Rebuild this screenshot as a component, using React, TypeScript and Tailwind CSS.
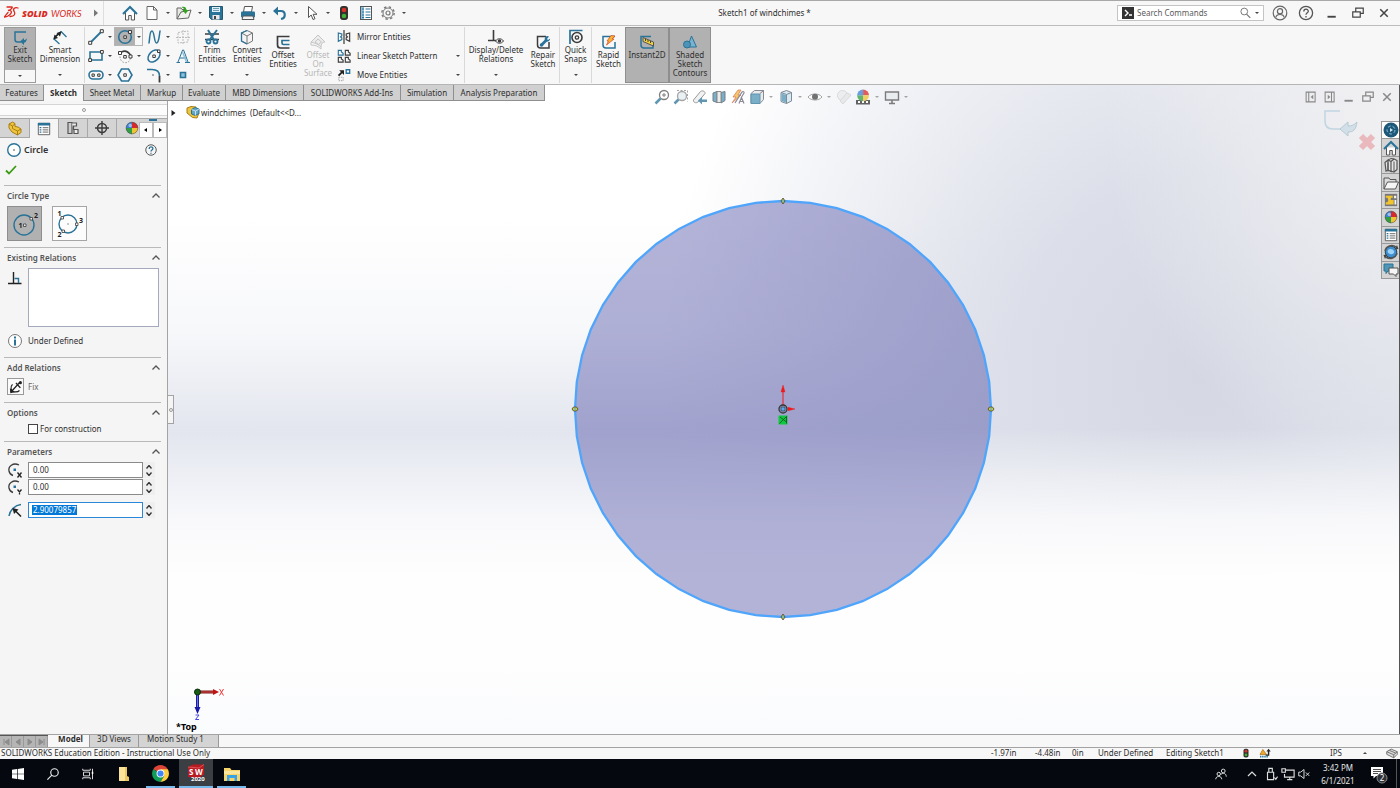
import React from "react";

type IconProps = { size?: string; children: React.ReactNode; box?: string };

const Svg = ({ size = "size-4", children, box = "0 0 16 16" }: IconProps) => (
  <svg className={`${size} shrink-0`} viewBox={box} fill="none" aria-hidden="true">
    {children}
  </svg>
);

const B = "#2a7398";
const L = "#8cc1dd";
const K = "#3c3c3c";

const Caret = ({ up = false }: { up?: boolean }) => (
  <Svg size="size-1" box="0 0 4 4">
    <path d={up ? "M0 3h4L2 1z" : "M0 1h4L2 3z"} fill="#444" />
  </Svg>
);

/* ---------- file toolbar icons ---------- */

const HomeIcon = () => (
  <Svg>
    <path d="M3.5 7.5V15h3.2v-4.500h2.600V15h3.200V7.500" fill="#fff" stroke="#555" />
    <path d="M1 9 8 2l7 7" stroke={B} strokeWidth="2" />
  </Svg>
);
const NewIcon = () => (
  <Svg>
    <path d="M3 1.500h6.500l3.500 3.500v9.500H3z" fill="#fdfdfd" stroke="#666" />
    <path d="M9.500 1.500V5H13" stroke="#666" />
  </Svg>
);
const OpenIcon = () => (
  <Svg>
    <path d="M1 14V3h4l1 1.500h4V7" fill="#e7e7e4" stroke="#666" />
    <path d="M1 14 5 7l10-2-2.500 8z" fill="#f1f1ee" stroke="#666" />
    <path d="M5 2c4-1 5 0 5.500 3h2L9.500 9 6.500 5h2C8 3.500 7 2.500 5 2z" fill="#35a321" />
  </Svg>
);
const SaveIcon = () => (
  <Svg>
    <path d="M1.500 1.500h13v13h-11l-2-2z" fill={B} stroke="#245871" />
    <path d="M4 2h8v5H4z" fill="#dff0f8" />
    <path d="M5 3.500h6M5 5.500h6" stroke="#6a9bb3" />
    <path d="M4.500 10h7v4.500h-7z" fill="#e8e8e8" />
    <path d="M6 11h2v3H6z" fill="#444" />
  </Svg>
);
const PrintIcon = () => (
  <Svg>
    <path d="M4.500 1.500h8L11.500 7h-8z" fill="#fff" stroke="#555" />
    <rect x="1" y="6.500" width="14" height="6" rx="1" fill={B} />
    <path d="M3 11h10l1 3.500H2z" fill="#f2f2f2" stroke="#555" />
  </Svg>
);
const UndoIcon = () => (
  <Svg>
    <path d="M4 6h5c5 0 5 7 0 8" stroke={B} strokeWidth="2.200" />
    <path d="M1 6l5-4.500v9z" fill={B} />
  </Svg>
);
const CursorIcon = () => (
  <Svg>
    <path d="M4.500 1.500v11l2.700-2.500 1.800 4.500 2-.800-1.900-4.400H13z" fill="#fff" stroke="#555" />
  </Svg>
);
const TrafficIcon = ({ size = "size-4" }: { size?: string }) => (
  <Svg size={size}>
    <rect x="4" y="1" width="8" height="14" rx="3" fill="#30302c" />
    <circle cx="8" cy="5" r="2.300" fill="#d8312a" />
    <circle cx="8" cy="11" r="2.300" fill="#3fae3a" />
  </Svg>
);
const ListIcon = () => (
  <Svg>
    <rect x="2.500" y="1.500" width="11" height="13" fill="#fff" stroke="#555" />
    <path d="M3 2h3v12H3z" fill={L} />
    <path d="M4 4h2M4 7h2M4 10h2M4 12.500h2M7.500 4h5M7.500 7h5M7.500 10h5M7.500 12.500h5" stroke={B} />
  </Svg>
);
const GearIcon = () => (
  <Svg>
    <circle cx="8" cy="8" r="5" stroke="#777" />
    <circle cx="8" cy="8" r="6.200" stroke="#777" strokeWidth="1.400" strokeDasharray="2.400 2.470" />
    <circle cx="8" cy="8" r="2" stroke="#777" strokeWidth="1.200" />
  </Svg>
);

const Logo = () => (
  <svg className="h-[18px] w-[84px] shrink-0" viewBox="0 0 84 18" role="img" aria-label="SOLIDWORKS">
    <g fill="none" stroke="#da291c" strokeWidth="1.300" strokeLinecap="round">
      <path d="M3 3h5c1 1-2 3-4 3.500 4-.500 4.500 2 1.500 4.500-1.500 1.300-4 2-5 2 1-1.500 2-3 3.500-4.500" />
      <path d="M14 4c-3-1.200-5.500.600-4 3.200 1.600 2.600 1 5-4 5.300" />
    </g>
    <text x="18" y="13" fill="#da291c" fontFamily="Open Sans, sans-serif" fontSize="9" fontStyle="italic" fontWeight="800">SOLID</text>
    <text x="47" y="13" fill="#da291c" fontFamily="Lato, sans-serif" fontSize="9" fontStyle="italic">WORKS</text>
  </svg>
);

const Tool = ({ label, caret, children }: { label: string; caret?: boolean; children: React.ReactNode }) => (
  <>
    <button aria-label={label} className="flex size-4 items-center justify-center">{children}</button>
    {caret && (
      <button aria-label={`${label} options`} className="flex size-4 items-center justify-center"><Caret /></button>
    )}
  </>
);

const Minimise = () => <Svg size="size-3"><path d="M2 13h11" stroke="currentColor" strokeWidth="2.500" /></Svg>;
const Restore = () => (
  <Svg size="size-3"><path d="M5 6V1.500h10v7h-4M1 6.500h10v7H1z" stroke="currentColor" strokeWidth="1.600" /></Svg>
);
const Close = () => <Svg size="size-3"><path d="m3 3 10 10M13 3 3 13" stroke="currentColor" strokeWidth="2" /></Svg>;

const TitleBar = () => (
  <header className="flex h-[26px] shrink-0 items-center border-y border-t-[#a8a8a8] border-b-[#bdbdbd] bg-[#f7f7f7]">
    <div className="flex h-full w-[104px] items-center border-r border-[#dedede] pl-1">
      <Logo />
      <button aria-label="Expand menu" className="flex w-3 justify-end">
        <Svg size="size-2" box="0 0 8 8"><path d="M2 .500v7L6 4z" fill="#777" /></Svg>
      </button>
    </div>
    <nav className="flex items-center pl-[18px]" aria-label="File tools">
      <div className="mr-1.5 flex"><Tool label="Home"><HomeIcon /></Tool></div>
      <Tool label="New" caret><NewIcon /></Tool>
      <Tool label="Open" caret><OpenIcon /></Tool>
      <Tool label="Save" caret><SaveIcon /></Tool>
      <Tool label="Print" caret><PrintIcon /></Tool>
      <Tool label="Undo" caret><UndoIcon /></Tool>
      <Tool label="Select" caret><CursorIcon /></Tool>
      <Tool label="Rebuild"><TrafficIcon /></Tool>
      <div className="ml-1.5 flex"><Tool label="File properties"><ListIcon /></Tool></div>
      <div className="ml-1.5 flex"><Tool label="Options" caret><GearIcon /></Tool></div>
    </nav>
    <h1 className="flex-1 text-center">Sketch1 of windchimes *</h1>
    <div className="flex h-4 w-[147px] items-center border border-[#c4c4c4] bg-white px-1">
      <Svg size="size-3" box="0 0 12 12">
        <path d="M0 0h12v12H0z" fill="#333" />
        <path d="M3 3l3 3-3 3M7 8h3" stroke="#fff" strokeWidth="1.400" />
      </Svg>
      <input aria-label="Search Commands" placeholder="Search Commands" className="ml-[3px] w-0 flex-1 outline-none placeholder:text-[#5c5c5c]" />
      <button aria-label="Search">
        <Svg size="size-3"><circle cx="7" cy="6" r="4.500" stroke="#777" strokeWidth="1.300" /><path d="m10 9.500 5 5" stroke="#777" strokeWidth="1.600" /></Svg>
      </button>
      <button aria-label="Search options" className="ml-1"><Caret /></button>
    </div>
    <div className="ml-[3px] flex text-[#444]">
      <button aria-label="Account" className="flex w-[26px] justify-center">
        <Svg><g stroke="#666" strokeWidth="1.200"><circle cx="8" cy="8" r="6.800" /><circle cx="8" cy="6.300" r="2.600" /><path d="M3.800 12.500C4.500 8.500 11.500 8.500 12.200 12.500" /></g></Svg>
      </button>
      <button aria-label="Help" className="flex w-[26px] justify-center">
        <Svg><g stroke="#555" strokeWidth="1.300"><circle cx="8" cy="8" r="6.600" /><path d="M5.800 6.500c0-3 4.500-3 4.500-.300C10.300 7.800 8 7.800 8 9.800M8 11v1.500" /></g></Svg>
      </button>
      <button aria-label="Minimize" className="flex w-[26px] items-center justify-center"><Minimise /></button>
      <button aria-label="Restore" className="flex w-[26px] items-center justify-center"><Restore /></button>
      <button aria-label="Close" className="mr-[3px] flex w-[26px] items-center justify-center"><Close /></button>
    </div>
  </header>
);

/* ---------- ribbon icons ---------- */

const ExitIcon = () => (
  <Svg>
    <path d="M14 3H3v7.500Q3 13 5.500 13H9" stroke={B} strokeWidth="1.500" />
    <path d="M8 12.500 12 9v2c1.500 0 2-.500 3-2-.300 3-1.500 4.700-3 4.700V16z" fill={B} />
  </Svg>
);
const DimensionIcon = () => (
  <Svg>
    <path d="M2 9 9 2.500M1.500 9.500l6 5.500M9 2.500 14.500 8" stroke={B} strokeWidth="1.300" />
    <path d="M4.500 4 9.500 2.500 8 7.500zM1.500 10.500l1-5 3.500 3.500z" fill="#222" />
    <path d="M3.500 7.500 7.500 4" stroke="#222" strokeWidth="1.600" />
  </Svg>
);
const LineIcon = () => (
  <Svg>
    <path d="M3 13 13 3" stroke={B} strokeWidth="1.800" />
    <path d="M.700 12.300h3v3h-3zM12.300.700h3v3h-3z" fill="#fff" stroke={K} />
  </Svg>
);
const CircleIcon = () => (
  <Svg>
    <circle cx="8" cy="8" r="6.300" stroke={B} strokeWidth="1.600" />
    <path d="M6.800 6.800h2.600v2.600H6.800zM11.500 1.500h3v3h-3z" fill="#eee" stroke={K} />
  </Svg>
);
const SplineIcon = () => (
  <Svg><path d="M3 14C4 8 3.500 2 6 2s2 12 4.500 12S13 8 14 2" stroke={B} strokeWidth="1.500" strokeLinecap="round" /></Svg>
);
const PlaneIcon = () => (
  <Svg><path d="M3 3.500 13 2v11L3 14zM8 1v14M1 8.500h14" stroke="#bbb" strokeDasharray="2 1" /></Svg>
);
const RectIcon = () => (
  <Svg>
    <path d="M2 4h12v8H2z" stroke={B} strokeWidth="1.600" />
    <path d="M.700 10.700h2.800v2.800H.700zM12.500 2.500h2.800v2.800h-2.800z" fill="#fff" stroke={K} />
  </Svg>
);
const ArcIcon = () => (
  <Svg>
    <path d="M3 5.500C5 2 11 2 13.500 7.500" stroke={K} strokeWidth="1.700" />
    <path d="M3 8.500c0 8 10 8 10.500 1.500" stroke="#999" strokeDasharray="1.500 1.500" />
    <path d="M1.500 3.500h3v3h-3zM12 7h3v3h-3zM6.700 7.500h2.600v2.600H6.700z" fill="#fff" stroke={K} />
  </Svg>
);
const EllipseIcon = () => (
  <Svg>
    <ellipse cx="8" cy="8" rx="7" ry="4.800" transform="rotate(-45 8 8)" stroke={B} strokeWidth="1.500" />
    <path d="M6.800 7h2.500v2.500H6.800zM11.500 2h2.500v2.500h-2.500z" fill="#fff" stroke={K} />
  </Svg>
);
const TextIcon = () => (
  <Svg>
    <path d="M1.500 14.500H5M10 14.500h5M3 14 7.600 2h1L13 14M5 10h6" stroke={B} />
    <path d="M7.500 4 11.500 14" stroke={L} strokeWidth="1.500" />
  </Svg>
);
const SlotIcon = () => (
  <Svg>
    <rect x="1" y="4" width="14" height="8" rx="4" stroke={B} strokeWidth="1.600" />
    <path d="M4 7h2.300v2.300H4zM9.700 7H12v2.300H9.700z" stroke={K} />
  </Svg>
);
const PolygonIcon = () => (
  <Svg>
    <path d="M4.500 2h7L15 8l-3.500 6h-7L1 8z" stroke={B} strokeWidth="1.600" />
    <path d="M6.800 6.800h2.500v2.500H6.800z" fill="#fff" stroke={K} />
  </Svg>
);
const FilletIcon = () => (
  <Svg>
    <path d="M1 2.500h5C11 2.500 13.500 5 13.500 9" stroke={B} strokeWidth="1.600" />
    <path d="M13.500 9v6.500" stroke={K} strokeWidth="1.800" />
    <path d="M6 7l2 2M8 7 6 9" stroke="#aaa" />
  </Svg>
);
const PointIcon = () => <Svg><path d="M5.500 5.500h5v5h-5z" fill={L} stroke={B} strokeWidth="1.600" /></Svg>;
const TrimIcon = () => (
  <Svg>
    <path d="M1 5h14M1 10.500h14" stroke={K} strokeWidth="1.300" />
    <path d="M4 1l6 10M13 1 5.500 11" stroke={B} strokeWidth="2" />
    <circle cx="4.500" cy="12.500" r="2" stroke={B} strokeWidth="1.800" />
    <circle cx="11.500" cy="12.500" r="2" stroke={B} strokeWidth="1.800" />
  </Svg>
);
const ConvertIcon = () => (
  <Svg>
    <path d="M2.500 4 8 1.500l5.500 2.500v8L8 15l-5.500-3z" fill="#f4f4f4" stroke="#777" />
    <path d="M2.500 4 8 7v8M8 7l5.500-3" stroke="#777" />
    <path d="M8 1.500 2.500 4v8L8 15" stroke={B} strokeWidth="1.300" />
  </Svg>
);
const OffsetIcon = () => (
  <Svg>
    <path d="M14.500 2.500H2.500V11q0 3 3 3h9" stroke={K} strokeWidth="1.700" />
    <path d="M14.500 6.500H7V9q0 1.500 1.500 1.500h6" stroke={B} strokeWidth="1.700" />
  </Svg>
);
const SurfaceIcon = () => (
  <Svg>
    <path d="M1 8 8 1l7 7c-3 0-4 2-4 5-3-3-6-4-10-5z" fill="#ececec" stroke="#c5c5c5" />
    <path d="M5 8l3-3 3.500 3L8.500 10.500zM1 8v3c4 0 7 1 10 4v-2" stroke="#c5c5c5" />
  </Svg>
);
const MirrorIcon = () => (
  <Svg size="size-3.5">
    <path d="M8 0v16" stroke={K} strokeWidth="1.400" />
    <path d="M1.500 3.500v9.500l4-2V9l-1.500-1 1.500-1.500v-2z" stroke={B} strokeWidth="1.300" />
    <path d="M14.500 3.500v9.500l-4-2V9l1.500-1-1.500-1.500v-2z" stroke={K} strokeWidth="1.300" />
  </Svg>
);
const PatternIcon = () => (
  <Svg size="size-3.5">
    <path d="M1.500 1.500H5v2L7 5v2H1.500z" stroke={B} strokeWidth="1.300" />
    <path d="M9.500 1.500H13v2L15 5v2H9.500zM1.500 9.500H5v2L7 13v2H1.500zM9.500 9.500H13v2L15 13v2H9.500z" stroke={K} strokeWidth="1.300" />
  </Svg>
);
const MoveIcon = () => (
  <Svg size="size-3.5">
    <path d="M10.500 2h4v4h-4z" fill="#fff" stroke={B} strokeWidth="1.500" />
    <path d="M1 8l3.500-3.500L2.500 2.500H8V8L6 6 2.500 9.500z" fill="#222" />
    <path d="M2 10.500h5v4H2z" stroke="#999" strokeDasharray="1.500 1" />
  </Svg>
);
const RelationsIcon = () => (
  <Svg>
    <path d="M5.500 1v10M0 11.500h8" stroke={K} strokeWidth="1.600" />
    <path d="M7.500 12c2-3 6-3 8 0-2 3-6 3-8 0z" fill="#fff" stroke={K} />
    <circle cx="11.500" cy="12" r="1.800" fill={K} />
  </Svg>
);
const RepairIcon = () => (
  <Svg>
    <path d="M11 2.500H2.500V11q0 3 3 3H14V8" stroke={K} strokeWidth="1.500" />
    <path d="m6.500 11 5-5" stroke={B} strokeWidth="2.800" />
    <path d="M14 2.500 12 5l1 1 2.200-1.500A3 3 0 0 1 10.500 7 3 3 0 0 1 12 2z" fill={B} />
    <circle cx="6.500" cy="11" r="1.800" fill={B} />
  </Svg>
);
const SnapsIcon = () => (
  <Svg>
    <path d="M2 15V1.500h12.500" stroke={B} strokeWidth="1.700" />
    <circle cx="9" cy="8.500" r="5" stroke={K} strokeWidth="1.600" />
    <circle cx="9" cy="8.500" r="1.700" stroke={K} strokeWidth="1.300" />
  </Svg>
);
const RapidIcon = () => (
  <Svg>
    <path d="M14 2.500H2V11q0 3 3 3h9V8" stroke={B} strokeWidth="1.500" />
    <path d="m10 1.500 4 .5-3 3h2L5.500 11 7.500 7H6z" fill="#f6b331" stroke="#d9532c" strokeWidth=".8" />
  </Svg>
);
const InstantIcon = () => (
  <Svg>
    <path d="M12 2.500H2V11q0 3 3 3h9v-3" stroke={B} strokeWidth="1.500" />
    <path d="M4 3.500 14.500 8v4L4 7.500z" fill="#f3d23b" stroke="#555" />
    <path d="M6.500 5v2M9 6v2M11.500 7v2" stroke="#444" />
  </Svg>
);
const ShadedIcon = () => (
  <Svg>
    <path d="M9.500 2 14.500 13H5.500z" fill="#7ab3d0" stroke={B} />
    <circle cx="5" cy="10.500" r="3.500" fill="#4d93b7" stroke={B} />
  </Svg>
);

const Lines = ({ lines }: { lines: string[] }) => (
  <span className="flex flex-col whitespace-nowrap text-center leading-[9px]">
    {lines.map((l) => <span key={l}>{l}</span>)}
  </span>
);

type BigProps = { icon: React.ReactNode; lines: string[]; width: string; caret?: boolean; low?: boolean; on?: boolean; off?: boolean };

const Big = ({ icon, lines, width, caret, low, on, off }: BigProps) => (
  <button
    disabled={off}
    className={`flex h-14 shrink-0 flex-col items-center ${width} ${on ? "pt-1.5" : low ? "pt-[7px]" : "pt-0.5"} ${on ? "border border-[#8e8e8e] bg-[#b1b1b1]" : ""} ${off ? "text-[#b8b8b8]" : ""}`}
  >
    {icon}
    <Lines lines={lines} />
    {caret && <span className="mt-auto mb-1.5"><Caret /></span>}
  </button>
);

const Rule = () => <div className="h-14 w-px shrink-0 bg-[#d9d9d9]" />;

const Small = ({ label, caret = true, on, children }: { label: string; caret?: boolean; on?: boolean; children: React.ReactNode }) => (
  <div className={`flex h-[19px] items-center border ${on ? "border-[#b5b5b5]" : "border-transparent"}`}>
    <button aria-label={label} className={`flex h-full items-center px-0.5 ${on ? "bg-[#b1b1b1]" : ""}`}>{children}</button>
    {caret && <button aria-label={`${label} options`} className="flex h-full w-2 items-center justify-center"><Caret /></button>}
  </div>
);

const ListTool = ({ icon, label, caret }: { icon: React.ReactNode; label: string; caret?: boolean }) => (
  <div className="flex h-[19px] items-center">
    <button className="flex items-center gap-1.5 whitespace-nowrap">{icon}{label}</button>
    {caret && <button aria-label={`${label} options`} className="ml-auto"><Caret /></button>}
  </div>
);

const Ribbon = () => (
  <section className="flex h-[58px] shrink-0 bg-[#f7f7f7] py-px pl-1" aria-label="Sketch tools">
    <div className="flex h-14 w-8 flex-col border border-[#9b9b9b]">
      <button className="flex h-[42px] flex-col items-center bg-[#b1b1b1] pt-px">
        <ExitIcon />
        <Lines lines={["Exit", "Sketch"]} />
      </button>
      <button aria-label="Exit Sketch options" className="flex flex-1 items-center justify-center"><Caret /></button>
    </div>
    <Big icon={<DimensionIcon />} lines={["Smart", "Dimension"]} width="w-12" caret />
    <Rule />
    <div className="grid w-[109px] shrink-0 grid-cols-[29px_29px_29px_22px] content-start">
      <Small label="Line"><LineIcon /></Small>
      <Small label="Circle" on><CircleIcon /></Small>
      <Small label="Spline"><SplineIcon /></Small>
      <Small label="Sketch plane" caret={false}><PlaneIcon /></Small>
      <Small label="Rectangle"><RectIcon /></Small>
      <Small label="Arc"><ArcIcon /></Small>
      <Small label="Ellipse"><EllipseIcon /></Small>
      <Small label="Text" caret={false}><TextIcon /></Small>
      <Small label="Slot"><SlotIcon /></Small>
      <Small label="Polygon" caret={false}><PolygonIcon /></Small>
      <Small label="Fillet"><FilletIcon /></Small>
      <Small label="Point" caret={false}><PointIcon /></Small>
    </div>
    <Rule />
    <Big icon={<TrimIcon />} lines={["Trim", "Entities"]} width="w-[34px]" caret />
    <Big icon={<ConvertIcon />} lines={["Convert", "Entities"]} width="w-9" caret />
    <Big icon={<OffsetIcon />} lines={["Offset", "Entities"]} width="w-9" low />
    <Big icon={<SurfaceIcon />} lines={["Offset", "On", "Surface"]} width="w-[34px]" low off />
    <div className="ml-0.5 w-[123px] shrink-0">
      <ListTool icon={<MirrorIcon />} label="Mirror Entities" />
      <ListTool icon={<PatternIcon />} label="Linear Sketch Pattern" caret />
      <ListTool icon={<MoveIcon />} label="Move Entities" caret />
    </div>
    <div className="w-1" />
    <Rule />
    <Big icon={<RelationsIcon />} lines={["Display/Delete", "Relations"]} width="w-[62px]" caret />
    <Big icon={<RepairIcon />} lines={["Repair", "Sketch"]} width="w-8" low />
    <Rule />
    <Big icon={<SnapsIcon />} lines={["Quick", "Snaps"]} width="w-[31px]" caret />
    <Rule />
    <Big icon={<RapidIcon />} lines={["Rapid", "Sketch"]} width="w-[33px]" low />
    <Big icon={<InstantIcon />} lines={["Instant2D"]} width="w-[44px]" low on />
    <Big icon={<ShadedIcon />} lines={["Shaded", "Sketch", "Contours"]} width="w-[42px]" low on />
  </section>
);

const ribbonTabs: [string, string][] = [
  ["Features", "w-[44px]"],
  ["Sketch", "w-[40px]"],
  ["Sheet Metal", "w-[57px]"],
  ["Markup", "w-[42px]"],
  ["Evaluate", "w-[43px]"],
  ["MBD Dimensions", "w-[78px]"],
  ["SOLIDWORKS Add-Ins", "w-[97px]"],
  ["Simulation", "w-[53px]"],
  ["Analysis Preparation", "w-[91px]"],
];

const RibbonTabs = () => (
  <div className="z-10 col-span-2 col-start-1 row-start-1 flex h-4 justify-self-start" role="tablist">
    {ribbonTabs.map(([name, w]) => (
      <button
        key={name}
        role="tab"
        aria-selected={name === "Sketch"}
        className={`flex shrink-0 items-center justify-center whitespace-nowrap border-r border-[#8f8f8f] ${w} ${name === "Sketch" ? "bg-[#f7f7f7] font-bold" : "border-b bg-[#d0d0d0]"}`}
      >
        {name}
      </button>
    ))}
  </div>
);

/* ---------- property manager ---------- */

const Ball = ({ size = "size-4" }: { size?: string }) => (
  <Svg size={size}>
    <path d="M8 8V1a7 7 0 0 1 7 7z" fill="#d92a2a" />
    <path d="M8 8h7a7 7 0 0 1-7 7z" fill="#f1c232" />
    <path d="M8 8v7a7 7 0 0 1-7-7z" fill="#2f9e44" />
    <path d="M8 8H1a7 7 0 0 1 7-7z" fill="#3b82d6" />
    <circle cx="8" cy="8" r="6.700" stroke="#555" strokeWidth=".7" />
    <circle cx="6" cy="5" r="2" fill="#fff" opacity=".5" />
  </Svg>
);
const PartIcon = () => (
  <Svg>
    <path d="M2 4l3.500-2L8 3.500v3l3 .5 3 2v3.500L10.500 15 5 12 2 8z" fill="#f0c43c" stroke="#a87f14" />
    <path d="M2 4l3.500 2v2.500l5 2.500v4M10.500 11 14 9M5.500 6 8 4" stroke="#a87f14" />
  </Svg>
);
const SheetIcon = () => (
  <Svg size="size-3.5">
    <path d="M1.500 1.500h13v13h-13z" fill="#fff" stroke="#555" />
    <path d="M1 1h14v3H1z" fill={B} />
    <path d="M3 6.500h2M3 9h2M3 11.500h2" stroke={B} strokeWidth="1.500" />
    <path d="M6.500 6.500H13M6.500 9H13M6.500 11.500H13" stroke="#555" />
  </Svg>
);
const ConfigIcon = () => (
  <Svg>
    <path d="M3 2.500h4v11H3z" fill="#ccc" stroke="#555" strokeWidth="1.200" />
    <path d="M7 3h4.500v3H8.500v4M9 9.500h4v4H9z" fill="#eee" stroke="#555" strokeWidth="1.200" />
  </Svg>
);
const TargetIcon = () => (
  <Svg>
    <circle cx="8" cy="8" r="4.500" stroke={K} strokeWidth="1.500" />
    <path d="M8 1v14M1 8h14" stroke={K} strokeWidth="1.400" />
  </Svg>
);
const ChevronUp = () => <Svg size="size-2" box="0 0 8 8"><path d="m.500 5.500 3.500-3.500 3.500 3.500" stroke="#555" strokeWidth="1.300" /></Svg>;

const Section = ({ title, height, children }: { title: string; height: string; children: React.ReactNode }) => (
  <section className={`ml-1 mr-1.5 border-t border-[#b9b9b9] ${height}`}>
    <h3 className="flex h-5 items-center justify-between pl-[3px] pr-px font-semibold text-[#555]">
      {title}
      <button aria-label={`Collapse ${title}`}><ChevronUp /></button>
    </h3>
    {children}
  </section>
);

const Spinner = ({ label }: { label: string }) => (
  <span className="flex w-3 flex-col items-center justify-center gap-[3px] bg-[#efefef]">
    <button aria-label={`Increase ${label}`}><Svg size="h-1 w-1.5" box="0 0 6 4"><path d="m.500 3.500 2.500-3 2.500 3" stroke="#333" strokeWidth="1.300" /></Svg></button>
    <button aria-label={`Decrease ${label}`}><Svg size="h-1 w-1.5" box="0 0 6 4"><path d="m.500.500 2.500 3 2.500-3" stroke="#333" strokeWidth="1.300" /></Svg></button>
  </span>
);

const CenterIcon = ({ axis }: { axis: "X" | "Y" }) => (
  <Svg>
    <path d="M12 3C6 0 1 4.500 2 9c.500 2.500 2 4 4 4.500" stroke={K} strokeWidth="1.300" />
    <path d="M6.500 6.500h2.500v2.500H6.500z" fill={B} />
    {axis === "X" ? (
      <path d="m10.500 10.500 4 5M14.500 10.500l-4 5" stroke="#222" strokeWidth="1.300" />
    ) : (
      <path d="m10.500 10.500 2 2.500 2-2.500M12.500 12.500v3" stroke="#222" strokeWidth="1.300" />
    )}
  </Svg>
);

const Param = ({ id, label, value, icon }: { id: string; label: string; value: string; icon: React.ReactNode }) => (
  <div className="flex h-4 items-stretch">
    <label htmlFor={id} aria-label={label} className="flex w-6 items-center pl-[3px]">{icon}</label>
    <input id={id} defaultValue={value} className="h-4 w-0 flex-1 border border-[#8a8a8a] bg-white px-1 pb-0.5 outline-none" />
    <Spinner label={label} />
  </div>
);

const managerTabs = [
  { name: "FeatureManager", icon: <PartIcon />, w: "w-[30px]" },
  { name: "PropertyManager", icon: <SheetIcon />, w: "w-[29px]" },
  { name: "ConfigurationManager", icon: <ConfigIcon />, w: "w-[29px]" },
  { name: "DimXpertManager", icon: <TargetIcon />, w: "w-[29px]" },
];

const PropertyManager = () => (
  <aside className="col-start-1 row-start-2 flex flex-col border-r border-[#a3a3a3] bg-[#f5f5f5]">
    <div className="mt-[3px] flex h-3 items-center justify-center border-y border-[#d5d5d5] bg-[#fcfcfc]">
      <span className="size-1 rounded-full border border-[#999]" />
    </div>
    <div className="mt-0.5 flex h-5" role="tablist">
      {managerTabs.map((t) => (
        <button
          key={t.name}
          role="tab"
          aria-label={t.name}
          aria-selected={t.name === "PropertyManager"}
          className={`flex items-center justify-center border-r border-t border-[#a8a8a8] ${t.w} ${t.name === "PropertyManager" ? "bg-[#f5f5f5]" : "border-b bg-[#d4d4d4]"}`}
        >
          {t.icon}
        </button>
      ))}
      <button role="tab" aria-label="DisplayManager" className="flex w-[22px] items-center justify-end border-y border-[#a8a8a8] bg-[#d4d4d4]"><Ball size="size-3.5" /></button>
      <div className="flex flex-1 flex-col">
        <div className="flex h-1 justify-center border-t border-[#a8a8a8] bg-[#d4d4d4]"><span className="h-0.5 w-2 bg-[#2a7398]" /></div>
        <div className="flex flex-1">
          <button aria-label="Scroll tabs left" className="flex flex-1 items-center justify-center border border-[#bbb] bg-white"><Svg size="size-1" box="0 0 4 4"><path d="M3 0v4L0 2z" fill="#000" /></Svg></button>
          <button aria-label="Scroll tabs right" className="flex flex-1 items-center justify-center border border-[#bbb] bg-white"><Svg size="size-1" box="0 0 4 4"><path d="M1 0v4l3-2z" fill="#000" /></Svg></button>
        </div>
      </div>
    </div>
    <div className="flex h-6 items-center pl-1.5 pr-2.5">
      <Svg><circle cx="8" cy="8" r="6.300" fill="#fff" stroke={B} strokeWidth="1.400" /><path d="m7 7 2 2M9 7 7 9" stroke="#aaa" /></Svg>
      <h2 className="ml-0.5 flex-1 text-[9px] font-semibold text-[#333]">Circle</h2>
      <button aria-label="Help">
        <Svg size="size-3"><circle cx="8" cy="8" r="7" stroke="#555" strokeWidth="1.300" /><path d="M5.500 6.500c0-3.500 5-3.500 5-.500C10.500 8 8 8 8 10M8 11.500v1.500" stroke={B} strokeWidth="1.800" /></Svg>
      </button>
    </div>
    <div className="flex h-[23px] items-start pl-[5px] pt-0.5">
      <button aria-label="OK"><Svg size="size-3" box="0 0 12 12"><path d="m1 6.500 3 3L11 2" stroke="#3a9b12" strokeWidth="1.800" /></Svg></button>
    </div>

    <Section title="Circle Type" height="h-[62px]">
      <div className="flex gap-2.5 pl-[3px]">
        <button aria-label="Circle" className="flex size-[35px] items-center justify-center border border-[#8e8e8e] bg-[#b1b1b1]">
          <Svg size="size-8" box="0 0 32 32">
            <circle cx="15" cy="17" r="10" stroke={B} strokeWidth="1.400" />
            <path d="M14.500 16h2.500v2.500h-2.500zM21 9.500h2.500V12H21z" fill="#eee" stroke={K} strokeWidth=".8" />
            <text x="9.500" y="19.500" fontSize="7" fontWeight="700" fill="#222">1</text>
            <text x="25" y="10" fontSize="7" fontWeight="700" fill="#222">2</text>
          </Svg>
        </button>
        <button aria-label="Perimeter circle" className="flex size-[35px] items-center justify-center border border-[#a5a5a5] bg-[#fcfcfc]">
          <Svg size="size-8" box="0 0 32 32">
            <circle cx="14" cy="16" r="9" stroke={B} strokeWidth="1.400" />
            <path d="M7 8.500h2.500V11H7zM21.500 15H24v2.500h-2.500zM8 22h2.500v2.500H8z" fill="#fff" stroke={K} strokeWidth=".8" />
            <path d="m13 15 2 2M15 15l-2 2" stroke="#bbb" strokeWidth=".8" />
            <text x="3.500" y="8" fontSize="7" fontWeight="700" fill="#222">1</text>
            <text x="3.500" y="29" fontSize="7" fontWeight="700" fill="#222">2</text>
            <text x="25" y="15" fontSize="7" fontWeight="700" fill="#222">3</text>
          </Svg>
        </button>
      </div>
    </Section>

    <Section title="Existing Relations" height="h-[110px]">
      <div className="flex">
        <div className="w-6 pl-[3px] pt-0.5">
          <Svg><path d="M6.500 2v11M1 13.500h13.500" stroke="#222" strokeWidth="1.400" /><path d="M7.500 8.500h4V13" stroke={B} strokeWidth="1.400" /></Svg>
        </div>
        <div role="listbox" aria-label="Existing Relations" className="mr-0.5 h-[59px] flex-1 border border-[#a5a9bd] bg-white" />
      </div>
      <div className="mt-1.5 flex items-center pl-[3px]">
        <Svg><circle cx="8" cy="8" r="6.500" fill="#fff" stroke="#777" /><path d="M8 6.500V12.500M8 3.500v2" stroke={B} strokeWidth="2" /></Svg>
        <span className="ml-[5px]">Under Defined</span>
      </div>
    </Section>

    <Section title="Add Relations" height="h-[45px]">
      <button className="flex items-center gap-1 pl-[3px] text-[#666]">
        <span className="flex size-[17px] items-center justify-center border border-[#999] bg-[#fafafa]">
          <Svg size="size-3.5">
            <path d="M2 14 12 3M8 3.500l5 5.500" stroke="#222" strokeWidth="1.600" />
            <path d="M4 5c-3 3-2 8 2 8.500 3 .500 4.500 0 6-1.500" stroke="#222" strokeWidth="1.400" />
            <path d="M1 9.500 1.500 15l5-1z" fill="#222" />
            <circle cx="13" cy="3" r="1.800" fill="#222" />
          </Svg>
        </span>
        Fix
      </button>
    </Section>

    <Section title="Options" height="h-[39px]">
      <label className="flex h-3 items-center gap-0.5 pl-6">
        <input type="checkbox" className="size-[10px] appearance-none border border-[#444] bg-white" />
        For construction
      </label>
    </Section>

    <Section title="Parameters" height="">
      <div className="flex flex-col gap-px pr-1.5">
        <Param id="cx" label="Center X" value="0.00" icon={<CenterIcon axis="X" />} />
        <Param id="cy" label="Center Y" value="0.00" icon={<CenterIcon axis="Y" />} />
        <div className="mt-1.5 flex h-4 items-stretch">
          <span className="flex w-6 items-center pl-[3px]">
            <Svg><path d="M2 14C3 8 8 3 14 2.500" stroke={B} strokeWidth="1.500" /><path d="M14 14.500 8 8.500" stroke="#222" strokeWidth="1.600" /><path d="M5.500 6l6 1.500L7 12z" fill="#222" /></Svg>
          </span>
          <div className="flex h-4 w-0 flex-1 items-center border border-[#2b87d8] bg-white px-[3px]">
            <span role="textbox" aria-label="Radius" contentEditable suppressContentEditableWarning className="bg-[#0078d7] px-px leading-[10px] text-white outline-none">2.90079857</span>
          </div>
          <Spinner label="Radius" />
        </div>
      </div>
    </Section>
  </aside>
);

/* ---------- graphics area ---------- */

const HudCaret = () => <span className="ml-1 mr-0.5 opacity-60"><Caret /></span>;

const HudCube = () => (
  <Svg><path d="M2 4.500 5.500 1.500h9v9L11 14.500H2z" fill="#e4e4e4" stroke="#667" /><path d="M11 4.500 14.500 1.500" stroke="#556" /><path d="M2 5h9v9.500H2z" fill="#4f95b5" stroke={B} /></Svg>
);

const HeadsUp = () => (
  <nav aria-label="View tools" className="absolute inset-x-0 top-1 flex items-center justify-center gap-[3px] pr-1 opacity-75">
    <button aria-label="Zoom to Fit"><Svg><circle cx="10" cy="6" r="4.500" fill="#fff" stroke="#555" strokeWidth="1.300" /><path d="m6.500 9.500-5 5" stroke={B} strokeWidth="2.500" /><path d="M8 6h4M10 4v4" stroke="#555" /></Svg></button>
    <button aria-label="Zoom to Area"><Svg><path d="M4 1.500h10.500v11" stroke="#888" strokeDasharray="2 1.500" /><circle cx="9" cy="7" r="4.500" fill="#e2edf2" stroke="#888" strokeWidth="1.300" /><path d="m5.500 10.500-4 4" stroke={B} strokeWidth="2.500" /></Svg></button>
    <button aria-label="Previous View"><Svg><path d="m1.500 11 7-8.500c2-1.500 5 0 4.500 2L6 13c-2 1.500-5 .500-4.500-2z" fill="#eee" stroke="#777" /><path d="M6 11.500 10 8v2.500h5v2.500h-5v2.500z" fill={B} /></Svg></button>
    <button aria-label="Section View"><Svg><path d="M2 4l4-1.500v11L2 12zM10 3.500 14 2.500v9L10 14z" fill="#4f95b5" stroke="#456" /><path d="M6 2.500h4v11H6z" fill="#e8e8e8" stroke="#666" /></Svg></button>
    <button aria-label="Annotation Views"><Svg><path d="M8 1 3 8h3l-4 6 9-8H8l3-5z" fill="#f6b331" stroke="#c74a27" strokeWidth=".7" /><path d="m5 14 7-11c1-1 2.500 0 2 1l-3 5M9 14.500l2.500-6 2.500 6M10 12.500h3" stroke="#667" strokeWidth="1.200" /></Svg></button>
    <button aria-label="View Orientation" className="flex items-center"><HudCube /><HudCaret /></button>
    <button aria-label="Display Style" className="flex items-center"><Svg><path d="M3 3.500 8.500 1.500l5 2V12l-5 2.500-5.500-2z" fill="#cfe4ee" stroke="#567" /><path d="M3 3.500 8.500 5.500v9M8.500 5.500l5-2" stroke="#567" /><path d="M3.500 4.500 8 6v7.500l-4.500-1.500z" fill="#4f95b5" /></Svg><HudCaret /></button>
    <button aria-label="Hide/Show Items" className="flex items-center"><Svg><path d="M1 8c3-4 11-4 14 0-3 4-11 4-14 0z" fill="#fff" stroke="#888" /><circle cx="8" cy="7.800" r="3" fill="#444" /></Svg><HudCaret /></button>
    <span className="opacity-40"><Svg><circle cx="6.500" cy="6.500" r="5" fill="#ddd" stroke="#999" /><path d="m7 15 8-9-4-2-7 8z" fill="#ccc" stroke="#999" /></Svg></span>
    <button aria-label="Apply Scene" className="flex items-center"><Svg><path d="M1 11h14v4.500H1z" fill="#333" /><path d="M3 13h2M7 13h2M11 13h2" stroke="#fff" strokeWidth="2" /><g transform="scale(.85) translate(1.500 -.5)"><path d="M8 8V1a7 7 0 0 1 7 7z" fill="#d92a2a" /><path d="M8 8h7a7 7 0 0 1-7 7z" fill="#f1c232" /><path d="M8 8v7a7 7 0 0 1-7-7z" fill="#2f9e44" /><path d="M8 8H1a7 7 0 0 1 7-7z" fill="#3b82d6" /></g></Svg><HudCaret /></button>
    <button aria-label="View Settings" className="flex items-center"><Svg><path d="M1.500 3h13v8h-13z" fill="#e8ecee" stroke="#555" strokeWidth="1.400" /><path d="M8 11v3M5 14.500h6" stroke="#555" strokeWidth="1.600" /></Svg><HudCaret /></button>
  </nav>
);

const RADIUS = 208;
const SEGMENTS = 48;
const outline = Array.from({ length: SEGMENTS }, (_, i) => {
  const a = (i * 2 * Math.PI) / SEGMENTS;
  return `${(214 + RADIUS * Math.cos(a)).toFixed(1)},${(214 + RADIUS * Math.sin(a)).toFixed(1)}`;
}).join(" ");
const handles = [[214, 6], [214, 422], [6, 214], [422, 214]];

const SketchCircle = () => (
  <svg className="size-[428px]" viewBox="0 0 428 428" role="img" aria-label="Circle sketch">
    <polygon points={outline} fill="rgb(8 8 130)" fillOpacity=".3" stroke="#4fa5fb" strokeWidth="2.300" />
    {handles.map(([x, y]) => (
      <g key={`${x}-${y}`}>
        <path d={x === 214 ? `M${x} ${y - 3}l2 3-2 3-2-3z` : `M${x - 3} ${y}l1.500-2h3l1.500 2-1.500 2h-3z`} fill="#c9c92c" stroke="#444" strokeWidth=".8" />
        <path d={`M${x} ${y - 1}v2`} stroke="#4fa5fb" />
      </g>
    ))}
    <path d="M214 210v-15" stroke="#f01818" />
    <path d="M214 190l-2 7h4zM219 212.300l7 1.700-7 1.700z" fill="#f01818" stroke="#f01818" strokeWidth=".4" />
    <circle cx="214" cy="214" r="4" stroke="#333" strokeWidth="1.300" fill="none" />
    <path d="M212 212h4v4h-4z" fill="#56a9f5" stroke="#333" strokeWidth=".7" />
    <path d="M209.500 220.500h9v9h-9z" fill="#10c840" />
    <path d="m210.500 228.500 7-7v7M211 222l6.500 5" fill="none" stroke="#154d22" strokeWidth=".8" />
  </svg>
);

const taskIcons: { name: string; icon: React.ReactNode }[] = [
  { name: "3DEXPERIENCE", icon: <Svg><circle cx="8" cy="8" r="7.500" fill="#1d5878" /><circle cx="8" cy="8" r="4" stroke={L} strokeDasharray="3 2" /><path d="M7 6v4l3-2z" fill="#cfe8f5" /></Svg> },
  { name: "Resources", icon: <HomeIcon /> },
  { name: "Design Library", icon: <Svg><path d="M2 5.500 5 3v10L3 14zM5 3l3 1.500v10l-3-1.500M8 4.500 11 2l3 1.500v9L11 15l-3-1" fill="#e5e5e5" stroke="#555" strokeWidth="1.200" /><path d="M5 5.500v9M11 4.500v10M5 3l3-1.500 3 .5" stroke="#555" /></Svg> },
  { name: "File Explorer", icon: <Svg><path d="M1 14V3h5l1 1.500h6V7" fill="#ddd" stroke="#555" /><path d="M1 14 4.500 7H15.500L12.500 14z" fill="#f6f6f6" stroke="#555" /></Svg> },
  { name: "View Palette", icon: <Svg size="size-3.5"><path d="M1 1h14v14H1z" fill="#777" /><path d="M2 3h8v2.500H8L7.500 8H11v5H2v-2.500h2L5 8 4 5.500H2z" fill="#f2c52d" /><path d="M11.500 3H14v3h-2.500zM12 8h2v5h-2z" fill="#f5f5f5" /></Svg> },
  { name: "Appearances", icon: <Ball size="size-3.5" /> },
  { name: "Custom Properties", icon: <SheetIcon /> },
  { name: "Forum", icon: <Svg><circle cx="8" cy="8" r="5.800" fill="#3d8fd1" stroke="#245" /><path d="M5 6c2-2 5-1 6 1s-2 4-4 3-3-2-2-4z" fill="#9fd3f5" /><path d="M2 7c1-5 7-7 11-4M14 9c-1 5-7 7-11 4" stroke="#555" strokeWidth="1.600" /><path d="m11.500 5.500 4-.5-1.500-4zM4.500 10.500l-4 .5L2 15z" fill="#444" /></Svg> },
  { name: "Comments", icon: <Svg><path d="M1 2h9v7H5l-2 2.500V9H1z" fill="#4f95b5" stroke={B} /><path d="M6 6h9v6h-2v2.500L10.500 12H6z" fill="#f5f5f5" stroke="#555" /></Svg> },
];

const Viewport = () => (
  <main className="relative col-start-2 row-span-2 row-start-1 flex items-center justify-center border-r border-[#555] bg-[linear-gradient(to_bottom,transparent_53%,rgba(246,247,250,0.55)_60%,rgba(252,252,253,0.86)_67%,#fefefe_76%,#fefefe_88%,#fafbfd_100%),radial-gradient(ellipse_24%_55%_at_100%_5%,#f0f0f2,transparent),radial-gradient(ellipse_44%_90%_at_84%_45%,#d5d8e3_0%,#dcdfe9_35%,transparent_100%),linear-gradient(to_bottom,#ffffff_20%,#f7f8fa_38%,#e2e5ee_54%)] pb-0.5 pr-0.5">
    <SketchCircle />
    <HeadsUp />
    <div className="absolute right-1.5 top-1.5 flex gap-[7px] text-[#888]">
      <button aria-label="Collapse left pane"><Svg size="size-3"><path d="M1.500 1.500h12v13h-12zM5 1.500v13" stroke="currentColor" strokeWidth="1.400" /><path d="M11 5v6L7.500 8z" fill="currentColor" /></Svg></button>
      <button aria-label="Collapse right pane"><Svg size="size-3"><path d="M1.500 1.500h12v13h-12zM10 1.500v13" stroke="currentColor" strokeWidth="1.400" /><path d="M5 5v6l3.500-3z" fill="currentColor" /></Svg></button>
      <button aria-label="Minimize document"><Minimise /></button>
      <button aria-label="Restore document"><Restore /></button>
      <button aria-label="Close document"><Close /></button>
    </div>
    <div className="absolute left-px top-5 flex items-center">
      <button aria-label="Expand tree"><Svg size="size-2" box="0 0 8 8"><path d="M2.500 1v6l4-3z" fill="#222" /></Svg></button>
      <span className="ml-2"><Svg><path d="M2 3l4-1.500 5 .5v3l3 3-2 5-4.500-.5L2 8z" fill="#f0c43c" stroke="#a87f14" /><path d="M6.500 4.500 10 2.500l4 1.500v4.500l-3.500 2-4-1.500z" fill="#63a6c6" stroke={B} /><path d="m6.500 4.500 4 1.500L14 4M10.500 6v4.500" stroke="#d8edf7" strokeWidth=".8" /></Svg></span>
      <span className="whitespace-pre">windchimes  (Default&lt;&lt;D...</span>
    </div>
    <div className="absolute right-[22px] top-[25px] opacity-35">
      <svg className="h-11 w-[54px]" viewBox="0 0 54 44" fill="none" role="img" aria-label="Confirmation corner">
        <path d="M17 1H2v10q0 8 8 8h8" stroke="#6fa9c8" strokeWidth="1.500" />
        <path d="m17 19 8-7v4c4 0 6-1 9-4-1 8-4 10-9 10v4z" fill="#9cc5da" stroke="#55869d" />
        <path d="m38 26 12 12M50 26 38 38" stroke="#e0565c" strokeWidth="6" />
      </svg>
    </div>
    <aside className="absolute right-0 top-9 flex h-[158px] flex-col border-l border-t border-[#999] bg-[#d4d4d4]" aria-label="Task pane">
      {taskIcons.map((t, i) => (
        <button key={t.name} aria-label={t.name} className={`flex w-[17px] flex-1 items-center justify-center border-b border-[#999] ${i === 0 ? "bg-white" : ""}`}>
          {t.icon}
        </button>
      ))}
    </aside>
    <button aria-label="Collapse panel" className="absolute left-0 top-[310px] flex h-[29px] w-1.5 items-center justify-center border border-l-0 border-[#a3a3a3] bg-[#f5f5f5]">
      <span className="size-1 rounded-full border border-[#999]" />
    </button>
    <div className="absolute bottom-0.5 left-2">
      <svg className="ml-4 h-9 w-9" viewBox="0 0 36 36" fill="none" role="img" aria-label="Axes">
        <path d="M6 8h16" stroke="#7c1616" strokeWidth="3" />
        <path d="M7 8h15" stroke="#d94a4a" />
        <path d="M21 5v6l6-3z" fill="#c01414" />
        <path d="M5.500 9v15" stroke="#1c1c9c" strokeWidth="3" />
        <path d="M5.500 10v13" stroke="#6c6cf0" />
        <path d="M2.500 23h6l-3 7z" fill="#1717a8" />
        <circle cx="5.500" cy="8" r="3" fill="#175c17" stroke="#0b2f0b" />
        <path d="m27.500 5 4 6.500M31.500 5l-4 6.500" stroke="#e33" />
        <path d="M3.500 31h3.500l-3.500 4.500h3.500" stroke="#44e" />
      </svg>
      <p className="mt-0.5 text-[9px] font-bold leading-[10px] text-black">*Top</p>
    </div>
  </main>
);

/* ---------- bottom bars ---------- */

const navPaths = ["M3 2v6M8 2v6L4 5z", "M7 2v6L3 5z", "M3 2v6l4-3z", "M7 2v6M2 2v6l4-3z"];
const navNames = ["First", "Previous", "Next", "Last"];

const ModelTabs = () => (
  <div className="flex h-[13px] shrink-0 border-t border-[#a3a3a3] bg-[#f7f7f7]" role="tablist">
    <div className="flex w-12 border-t border-[#555] bg-[#b5b5b5]">
      {navPaths.map((d, i) => (
        <button key={d} aria-label={navNames[i]} className="flex flex-1 items-center justify-center border-r border-[#999]">
          <Svg size="size-2.5" box="0 0 10 10"><path d={d} fill="#8c8c8c" stroke="#8c8c8c" /></Svg>
        </button>
      ))}
    </div>
    <button role="tab" aria-selected className="flex w-[42px] items-center justify-center border-r border-[#999] pb-1 pl-1 font-bold">Model</button>
    <button role="tab" aria-selected={false} className="flex w-[49px] items-center justify-center border-r border-[#999] bg-[#d4d4d4] pb-1">3D Views</button>
    <button role="tab" aria-selected={false} className="flex w-[80px] items-center justify-center border-r border-[#999] bg-[#d4d4d4] pb-1 pr-1.5">Motion Study 1</button>
  </div>
);

const StatusBar = () => (
  <footer className="flex h-3 shrink-0 items-center whitespace-nowrap border-t border-[#a3a3a3] bg-[#f7f7f7] pb-0.5 pl-px">
    <span className="flex-1">SOLIDWORKS Education Edition - Instructional Use Only</span>
    <span className="w-11">-1.97in</span>
    <span className="w-[37px]">-4.48in</span>
    <span className="w-[26px]">0in</span>
    <span className="w-[68px]">Under Defined</span>
    <span className="w-[75px]">Editing Sketch1</span>
    <span className="flex w-[18px]"><TrafficIcon size="size-2.5" /></span>
    <span className="w-[71px]">
      <Svg size="h-2.5 w-3" box="0 0 16 14"><path d="M1 9l4-7 5 7z" fill="#f0a92c" stroke="#a86a10" /><path d="M1 12h12" stroke={B} strokeWidth="2.500" strokeDasharray="2 1" /><path d="M9 9h3V5h-2l3-4 3 4h-2v6H9z" fill="#222" /></Svg>
    </span>
    <button className="flex w-[55px] items-center justify-between text-left">IPS<span className="mr-[18px]"><Caret up /></span></button>
    <span className="mr-px">
      <Svg size="h-3 w-3.5" box="0 0 16 13"><path d="M2 5l5-3 7 3v3l-4 4L2 8z" fill="#ddd" stroke="#666" /><path d="m2 5 8 3.500L14 5M10 8.500V12M5 3.500l7 3" stroke="#666" /></Svg>
    </span>
  </footer>
);

const TaskBar = () => (
  <nav className="flex h-[29px] shrink-0 items-center bg-[#05090f] text-[#e8e8e8]" aria-label="Taskbar">
    <button aria-label="Start" className="flex w-[35px] justify-center"><Svg size="size-3" box="0 0 12 12"><path d="M0 1.700 5 1v4.700H0zM5.700.900 12 0v5.700H5.700zM0 6.300h5V11l-5-.700zM5.700 6.300H12V12l-6.300-.900z" fill="#fff" /></Svg></button>
    <button aria-label="Search" className="flex w-[35px] justify-center"><Svg size="size-3"><circle cx="10" cy="6" r="5" stroke="#eee" strokeWidth="1.500" /><path d="m6.500 9.500-6 6" stroke="#eee" strokeWidth="1.500" /></Svg></button>
    <button aria-label="Task View" className="flex w-[35px] justify-center"><Svg size="size-3"><path d="M2 5.500h8v5H2zM1 1v2h10V1M1 15v-2h10v2M14 1v14" stroke="#ddd" strokeWidth="1.300" /><path d="M13 5h2v3h-2z" fill="#fff" /></Svg></button>
    <button aria-label="Folder" className="flex w-[37px] justify-center"><Svg><path d="M3 1h8v9l2 1v4H3z" fill="#eec765" /><path d="M3 1h6v14H3z" fill="#fbe39a" /></Svg></button>
    <button aria-label="Chrome" className="ml-1 flex h-full w-[29px] items-center justify-center border-b-2 border-[#76b9ed] pt-0.5">
      <Svg size="size-[17px]"><path d="M8 8 1.100 4A8 8 0 0 1 14.900 4z" fill="#db4437" /><path d="M8 8 1.100 4A8 8 0 0 0 8 16l3.500-6z" fill="#0f9d58" /><path d="M8 4h6.900A8 8 0 0 1 8 16l3.500-6z" fill="#ffcd40" /><circle cx="8" cy="8" r="3.700" fill="#fff" /><circle cx="8" cy="8" r="2.900" fill="#4285f4" /></Svg>
    </button>
    <button aria-label="SOLIDWORKS 2020" className="ml-1 flex h-full w-[34px] items-center justify-center border-b-2 border-[#76b9ed] bg-[#3b3f44]">
      <Svg size="size-[18px]" box="0 0 18 18">
        <path d="M1 3l5-2.500h11v10L12 14l-11-1z" fill="#b81c22" />
        <path d="m1 3 11 1 5-3.500" stroke="#e86a6a" strokeWidth=".7" />
        <text x="2" y="11" fontSize="8" fontWeight="700" fill="#fff">S</text>
        <text x="8" y="11" fontSize="8" fontWeight="700" fill="#fff">W</text>
        <text x="4" y="17" fontSize="6" fontWeight="700" fill="#fff">2020</text>
      </Svg>
    </button>
    <button aria-label="File Explorer" className="ml-1 flex h-full w-[29px] items-center justify-center border-b-2 border-[#76b9ed] pt-0.5">
      <Svg><path d="M0 2h6l1.500 2H16v11H0z" fill="#f7d56b" /><path d="M0 5h16v3H0z" fill="#fbe6a0" /><path d="M3 15V9h10v6h-2.500v-3h-5v3z" fill="#38a3e8" /></Svg>
    </button>
    <div className="flex-1" />
    <button aria-label="People" className="mr-[20px]"><Svg size="size-3"><g stroke="#ddd" strokeWidth="1.300"><circle cx="11" cy="4" r="2.500" /><circle cx="5" cy="8" r="2.300" /><path d="M1 15c0-5 8-5 8 0M8 8.500c3-3 7-1 7 3" /></g></Svg></button>
    <button aria-label="Show hidden icons" className="mr-[7px]"><Svg size="size-2.5" box="0 0 10 10"><path d="m1 7 4-4 4 4" stroke="#ddd" strokeWidth="1.200" /></Svg></button>
    <button aria-label="USB" className="mr-[3px]"><Svg size="size-3.5"><path d="M4 6h7v8.500H4zM5.500 6V1.500h4V6M12 12l1.500 2 2-3" stroke="#ddd" strokeWidth="1.300" /></Svg></button>
    <button aria-label="Network" className="mr-[3px]"><Svg size="size-3.5"><path d="M5 3.500h10v8H4V8M10 11.500V14M7 14.500h6M1 2h4v4H1z" stroke="#ddd" strokeWidth="1.300" /></Svg></button>
    <button aria-label="Volume muted" className="mr-1.5"><Svg size="size-3"><path d="M1 5.500h2.500L8 2v12l-4.500-3.500H1zM10.500 6l4.500 4.500M15 6l-4.500 4.500" stroke="#ddd" strokeWidth="1.300" /></Svg></button>
    <div className="w-11 text-center leading-[13px]"><p>3:42 PM</p><p>6/1/2021</p></div>
    <button aria-label="2 notifications" className="ml-2.5 mr-2 w-[18px]">
      <svg className="h-5 w-[18px]" viewBox="0 0 18 20" fill="none">
        <path d="M1 3h12v9H6l-2.500 2.500V12H1z" fill="#fff" />
        <path d="M3 5.500h8M3 7.500h8M3 9.500h5" stroke="#222" strokeWidth=".8" />
        <circle cx="12" cy="14" r="5" fill="#2c3036" stroke="#8a8a8a" />
        <text x="9.800" y="17" fontSize="8" fill="#fff">2</text>
      </svg>
    </button>
    <div className="h-full w-1 border-l border-[#555]" />
  </nav>
);

export default function App() {
  return (
    <div className="flex h-screen flex-col overflow-hidden bg-[#f7f7f7] font-['Noto_Sans','Open_Sans',sans-serif] text-[8px] leading-3 text-[#2e2e2e]">
      <TitleBar />
      <Ribbon />
      <div className="grid min-h-0 flex-1 grid-cols-[168px_1fr] grid-rows-[16px_1fr] border-t border-[#b5b5b5]">
        <Viewport />
        <RibbonTabs />
        <PropertyManager />
      </div>
      <ModelTabs />
      <StatusBar />
      <TaskBar />
    </div>
  );
}
